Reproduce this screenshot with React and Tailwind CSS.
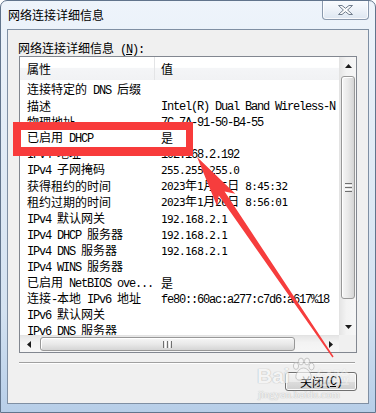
const CJK = /([\u2e80-\u9fff\uff00-\uffef]+)/

const rows = [
  ['连接特定的 DNS 后缀', ''],
  ['描述', 'Intel(R) Dual Band Wireless-N'],
  ['物理地址', '7C-7A-91-50-B4-55'],
  ['已启用 DHCP', '是'],
  ['IPv4 地址', '192.168.2.192'],
  ['IPv4 子网掩码', '255.255.255.0', 'sans'],
  ['获得租约的时间', '2023年1月25日 8:45:32', 'sans'],
  ['租约过期的时间', '2023年1月26日 8:56:01', 'sans'],
  ['IPv4 默认网关', '192.168.2.1', 'sans'],
  ['IPv4 DHCP 服务器', '192.168.2.1', 'sans'],
  ['IPv4 DNS 服务器', '192.168.2.1', 'sans'],
  ['IPv4 WINS 服务器', ''],
  ['已启用 NetBIOS ove...', '是'],
  ['连接-本地 IPv6 地址', 'fe80::60ac:a277:c7d6:a617%18'],
  ['IPv6 默认网关', ''],
  ['IPv6 DNS 服务器', ''],
]

// split into CJK runs and half-width runs, SimSun style (6px latin cells)
function Mixed({ text, sans = false }) {
  return text
    .split(CJK)
    .filter(Boolean)
    .map((part, i) =>
      CJK.test(part) ? (
        <span key={i} className="font-['Noto_Sans_CJK_SC',sans-serif] text-[12px]">
          {part}
        </span>
      ) : sans ? (
        <span
          key={i}
          className="whitespace-pre font-['DejaVu_Sans_Mono',monospace] text-[11px] tracking-[-0.6px]"
        >
          {part}
        </span>
      ) : (
        <span
          key={i}
          className="whitespace-pre font-['Liberation_Mono',monospace] text-[12px] tracking-[-1.2px]"
        >
          {part}
        </span>
      ),
    )
}

function Tri({ dir }) {
  const pts = {
    up: '0,4 3.5,0 7,4',
    down: '0,0 7,0 3.5,4',
    left: '4,0 4,7 0,3.5',
    right: '0,0 0,7 4,3.5',
  }[dir]
  const vertical = dir === 'up' || dir === 'down'
  return (
    <svg width={vertical ? 7 : 4} height={vertical ? 4 : 7}>
      <polygon points={pts} fill="#1a1a1a" />
    </svg>
  )
}

function VScroll() {
  return (
    <div className="flex w-[17px] flex-col border-l border-[#e3e3e3] bg-[linear-gradient(90deg,#e6e6e6,#f3f3f3_40%,#f6f6f6)]">
      <div className="flex h-[17px] items-center justify-center">
        <Tri dir="up" />
      </div>
      <div className="mx-[1px] mt-[2px] flex h-[223px] items-center justify-center rounded-[3px] border border-[#989898] bg-[linear-gradient(90deg,#f6f6f6,#e9e9e9_50%,#d5d5d5)] shadow-[inset_1px_1px_0_#fff]">
        <div className="flex flex-col gap-[1px]">
          <div className="h-[1px] w-[7px] bg-[#707070]" />
          <div className="h-[1px] w-[7px] bg-[#fff]" />
          <div className="h-[1px] w-[7px] bg-[#707070]" />
          <div className="h-[1px] w-[7px] bg-[#fff]" />
          <div className="h-[1px] w-[7px] bg-[#707070]" />
        </div>
      </div>
      <div className="flex-1" />
      <div className="flex h-[17px] items-center justify-center">
        <Tri dir="down" />
      </div>
    </div>
  )
}

function HScroll() {
  return (
    <div className="flex h-[17px] w-[319px] border-t border-[#e3e3e3] bg-[linear-gradient(180deg,#e6e6e6,#f3f3f3_40%,#f6f6f6)]">
      <div className="flex w-[17px] items-center justify-center">
        <Tri dir="left" />
      </div>
      <div className="my-[1px] ml-[3px] flex w-[255px] items-center justify-center rounded-[3px] border border-[#989898] bg-[linear-gradient(180deg,#f6f6f6,#e9e9e9_50%,#d5d5d5)] shadow-[inset_1px_1px_0_#fff]">
        <div className="flex gap-[1px]">
          <div className="h-[7px] w-[1px] bg-[#707070]" />
          <div className="h-[7px] w-[1px] bg-[#fff]" />
          <div className="h-[7px] w-[1px] bg-[#707070]" />
          <div className="h-[7px] w-[1px] bg-[#fff]" />
          <div className="h-[7px] w-[1px] bg-[#707070]" />
        </div>
      </div>
      <div className="flex-1" />
      <div className="flex w-[17px] items-center justify-center">
        <Tri dir="right" />
      </div>
    </div>
  )
}

function DetailsList() {
  return (
    <div className="ml-[11px] flex h-[297px] w-[338px] flex-col border border-[#828790] bg-white text-black">
      <div className="flex h-[278px]">
        <div className="flex w-[319px] flex-col overflow-hidden">
          <div className="flex h-[23px] shrink-0 bg-[linear-gradient(180deg,#fff,#fff_45%,#f4f5f7_50%,#f1f2f4)]">
            <div className="flex w-[135px] items-center border-r border-[#e3e4e6] pl-[7px]">
              <Mixed text="属性" />
            </div>
            <div className="flex items-center pl-[6px]">
              <Mixed text="值" />
            </div>
          </div>
          <div className="mt-[1px] flex flex-col">
            {rows.map(([name, value, kind]) => (
              <div key={name} className="flex h-[16.14px] shrink-0 items-center whitespace-nowrap leading-[16px]">
                <div className="w-[135px] shrink-0 overflow-hidden pl-[7px]">
                  <Mixed text={name} />
                </div>
                <div className="pl-[6px]">
                  <Mixed text={value} sans={kind === 'sans'} />
                </div>
              </div>
            ))}
          </div>
        </div>
        <VScroll />
      </div>
      <div className="flex">
        <HScroll />
        <div className="h-[17px] w-[17px] bg-[#f0f0f0]" />
      </div>
    </div>
  )
}

function Watermark() {
  return (
    <div className="pointer-events-none absolute left-[256px] top-[356px] flex flex-col opacity-70">
      <div className="flex items-end">
        <span className="font-['Liberation_Sans',sans-serif] text-[21px] font-bold leading-[30px] text-[#f7f7f7] [text-shadow:0_0_1px_#a8a8a8,0_0_1px_#a8a8a8]">
          Bai
        </span>
        <svg width="26" height="26" viewBox="0 0 26 26" className="mb-[8px]">
          <g fill="#f8f8f8" stroke="#b4b4b4" strokeWidth="1">
            <ellipse cx="6" cy="9" rx="2.6" ry="3.4" />
            <ellipse cx="11" cy="4.5" rx="2.6" ry="3.4" />
            <ellipse cx="17" cy="4.5" rx="2.6" ry="3.4" />
            <ellipse cx="21.5" cy="9.5" rx="2.6" ry="3.4" />
            <path d="M13.5 11 C9 11 5 17 6 21 C7 24 11 23 13.5 22.5 C16 23 20 24 21 21 C22 17 18 11 13.5 11 Z" />
          </g>
        </svg>
        <span className="font-['Noto_Sans_CJK_SC',sans-serif] text-[17px] font-bold leading-[28px] text-[#f7f7f7] opacity-60 [text-shadow:0_0_1px_#b8b8b8]">
          经验
        </span>
      </div>
      <span className="-mt-[3px] pl-[1px] font-['Liberation_Serif',serif] text-[11px] leading-[12px] text-[#f7f7f7] [text-shadow:0_0_1px_#a8a8a8,0_0_1px_#a8a8a8]">
        jingyan.baidu.com
      </span>
    </div>
  )
}

export default function App() {
  return (
    <div className="relative h-[413px] w-[376px] overflow-hidden rounded-t-[7px] border border-[#61748c] bg-[linear-gradient(180deg,#eef4fb,#e3ecf6_30%,#d4e2f1_75%,#b7cee8)]">
      <div className="flex h-[28px] items-start justify-between">
        <div className="pl-[7px] pt-[6px] font-['Noto_Sans_CJK_SC',sans-serif] text-[12px] leading-[16px] text-black">
          网络连接详细信息
        </div>
        <div className="-mt-px mr-[6px] flex h-[20px] w-[47px] items-center justify-center rounded-b-[4px] border border-t-0 border-[#8a99ad] bg-[linear-gradient(180deg,#fbfdff,#eef3f9_50%,#dde6f1)] shadow-[inset_0_0_0_1px_rgba(255,255,255,0.8)]">
          <svg width="15" height="10" viewBox="0 0 15 10">
            <polygon
              points="0.5,0.5 4,0.5 7.5,3.3 11,0.5 14.5,0.5 9.6,5 14.5,9.5 11,9.5 7.5,6.7 4,9.5 0.5,9.5 5.4,5"
              fill="#fdfdfd"
              stroke="#6f7c8c"
              strokeWidth="1"
              strokeLinejoin="round"
            />
          </svg>
        </div>
      </div>

      <div className="mx-[6px] flex h-[375px] flex-col border border-[#7f8fa3] bg-[#f0f0f0]">
        <div className="h-[26px] pl-[10px] pt-[9px] leading-[16px] text-black">
          <Mixed text="网络连接详细信息 " />
          <span className="font-['Liberation_Mono',monospace] text-[12px] tracking-[-1.2px]">
            (<span className="underline">N</span>):
          </span>
        </div>
        <DetailsList />
        <div className="ml-[11px] mt-[9px] h-[2px] w-[336px] border-t border-b border-t-[#a0a0a0] border-b-white" />
        <div className="mt-[8px] flex justify-end pr-[11px]">
          <button className="flex h-[19px] w-[72px] items-center justify-center rounded-[3px] border border-[#707070] bg-[linear-gradient(180deg,#f2f2f2,#ebebeb_50%,#dddddd_51%,#cfcfcf)] leading-[16px] text-black shadow-[inset_0_0_0_1px_#fbfbfb]">
            <Mixed text="关闭" />
            <span className="font-['Liberation_Mono',monospace] text-[12px] tracking-[-1.2px]">
              (<span className="underline">C</span>)
            </span>
          </button>
        </div>
      </div>

      {/* red annotation box */}
      <div className="pointer-events-none absolute left-[12px] top-[121px] h-[34px] w-[180px] border-b-[9px] border-l-[8px] border-r-[7px] border-t-[8px] border-[#f83b3b]" />

      {/* red arrow */}
      <svg className="pointer-events-none absolute left-0 top-0" width="376" height="413">
        <polygon
          points="196,156 234.3,192.8 223.6,190.4 332.6,355.6 331.4,356.4 217.8,194.4 216.1,205.2"
          fill="#f63d3d"
        />
      </svg>

      <Watermark />
    </div>
  )
}
